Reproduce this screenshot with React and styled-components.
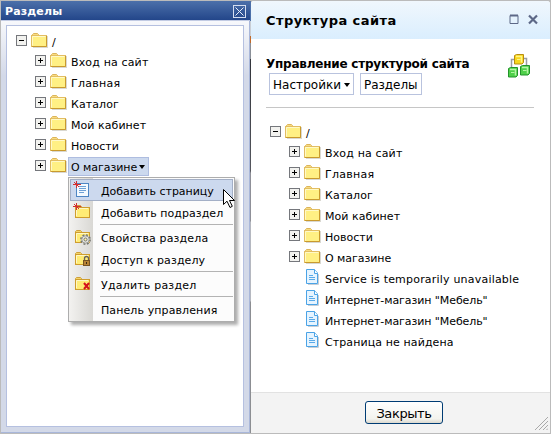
import React from 'react';
import styled, { createGlobalStyle, css } from 'styled-components';

const Global = createGlobalStyle`
  *, *::before, *::after { box-sizing: border-box; }
  body { margin: 0; background: #b9b9b9; }
`;

const Screen = styled.div`
  width: 551px;
  height: 434px;
  display: flex;
  overflow: hidden;
  padding-top: 1px;
  padding-left: 1px;
  background: #bbb;
  font-family: 'DejaVu Sans', Verdana, sans-serif;
  font-size: 11px;
  line-height: 13px;
  color: #000;
`;

const Label = styled.span`
  white-space: nowrap;
  letter-spacing: ${(p) => p.$ls ?? 0.1}px;
`;

/* ---- Left window ---- */
const SectionsWindow = styled.section`
  width: 249px;
  height: 432px;
  display: flex;
  flex-direction: column;
  background: linear-gradient(#f8f9fc 19px, #d3d9e8 75px);
  border-right: 1px solid #a9b7da;
  border-bottom: 1px solid #a9b7da;
`;

const SectionsTitle = styled.header`
  height: 20px;
  flex: none;
  width: 249px;
  display: flex;
  align-items: center;
  justify-content: space-between;
  padding: 1px 4px 0 4px;
  color: #fff;
  font-weight: bold;
  border-bottom: 1px solid #c2cbe3;
  background: linear-gradient(#4c70aa, #23468a);
`;

const SectionsBody = styled.div`
  flex: 1;
  margin: 4px 5px 5px 5px;
  border: 1px solid #b5c0e0;
  background: #fff;
  padding: 4px 0 0 9px;
`;

const Backdrop = styled.div`
  width: 1px;
  height: 432px;
  background: linear-gradient(#4c70aa 0 20px, #c9ced5 20px 35px, #c06a2b 35px 42px, #8a8f97 42px 58px, #34363c 58px 65px, #55575e 170px, #8f9098 172px 220px, #b5b8c0 221px 300px, #8c8e92 301px);
`;

/* ---- Tree ---- */
const Tree = styled.div`
  display: flex;
  flex-direction: column;
`;

const TreeRow = styled.div`
  display: flex;
  align-items: center;
  height: ${(p) => (p.$root ? 20 : 21)}px;
  padding-top: ${(p) => (p.$root ? 1 : 0)}px;
  padding-left: ${(p) => (p.$root ? 0 : p.$file ? 36 : 19)}px;
`;

const Toggle = styled.svg`
  flex: none;
  width: 11px;
  height: 11px;
  margin-right: 4px;
`;

const FolderSvg = styled.svg`
  flex: none;
  width: 17px;
  height: 15px;
`;

const RowLabel = styled.span`
  position: relative;
  display: flex;
  align-items: center;
  height: 19px;
  margin-left: ${(p) => (p.$file ? 3 : 1)}px;
  margin-top: 2px;
  padding: 1px 2px 0;
  border: 1px solid transparent;
  ${(p) => p.$active && css`
    border-color: #aebde0;
    background: #ccd9ee;
    width: 81px;
  `}
`;

const Caret = styled.svg`
  width: 6px;
  height: 4px;
  margin-left: ${(p) => p.$gap ?? 2}px;
  flex: none;
`;

function ToggleBox({ open }) {
  return (
    <Toggle viewBox="0 0 11 11">
      <rect x=".5" y=".5" width="10" height="10" fill="#f2f2ef" stroke="#75777c" />
      <path d={open ? 'M3 5.5h5' : 'M3 5.5h5M5.5 3v5'} stroke="#000" />
    </Toggle>
  );
}

function Folder() {
  return (
    <FolderSvg viewBox="0 0 17 15">
      <path d="M2 14h14V3h1v12H2z" fill="#c9c7bd" opacity=".7" />
      <path d="M1.500 3V1.500l1-1h4l1 1V3" fill="#f8dc80" stroke="#dcb45a" />
      <rect x=".5" y="2.500" width="15" height="11" fill="#fff084" stroke="#e2bd62" />
      <path d="M1.500 12.500v-9h13" fill="none" stroke="#fff9c8" />
      <path d="M1 13.500h14.500V3" fill="none" stroke="#c99a2e" />
    </FolderSvg>
  );
}

const FileSvg = styled.svg`
  flex: none;
  width: 13px;
  height: 16px;
  margin-top: -1px;
`;

function File() {
  return (
    <FileSvg viewBox="0 0 13 16">
      <path d="M2 15.500h10.500V5" fill="none" stroke="#c8ced5" />
      <path d="M.5.5h8l3 3.500v10.500H.5z" fill="#e6f4ff" stroke="#4aa3e6" />
      <path d="M8.500.5v4h3" fill="#fff" stroke="#4aa3e6" />
      <path d="M3 6.500h4M3 8.500h6M3 10.500h6" stroke="#5aaae8" />
    </FileSvg>
  );
}

function DownCaret({ gap }) {
  return (
    <Caret $gap={gap} viewBox="0 0 6 4">
      <path d="M0 0h6L3 4z" fill="#000" />
    </Caret>
  );
}

/* ---- Context menu ---- */
const Menu = styled.div`
  position: absolute;
  z-index: 2;
  left: -1px;
  top: 19px;
  width: 167px;
  padding: 1px;
  border: 1px solid #adadad;
  background: linear-gradient(90deg, #f3f2f0, #d9d8d4) 0 0 / 24px 100% no-repeat, #fcfcfc;
  box-shadow: 3px 3px 3px rgba(0, 0, 0, 0.32);
`;

const MenuItem = styled.div`
  display: flex;
  align-items: center;
  height: 22px;
  padding-left: 1px;
  border: 1px solid transparent;
  ${(p) => p.$active && css`
    border-color: #a3afc6;
    background: #ccd9ee;
  `}
`;

const MenuIcon = styled.svg`
  flex: none;
  width: 20px;
  height: 20px;
  margin-right: 9px;
`;

const MenuLabel = styled(Label)`
  padding-top: 2px;
`;

const Separator = styled.div`
  height: 1px;
  margin: 1px 0 1px 30px;
  background: #b3b3b3;
`;

const Pointer = styled.svg`
  position: absolute;
  z-index: 3;
  left: 154px;
  top: 31px;
  width: 12px;
  height: 20px;
`;

const spark = <path d="M1 4.500h8M4.500 1v7M2 2l5 5" stroke="#d32f2f" />;

const smallFolder = (
  <>
    <path d="M3.500 6V4.500l1-1h4l1 1V6" fill="#f4d568" stroke="#cfa03a" />
    <rect x="3.500" y="5.500" width="14" height="10" fill="#ffec75" stroke="#cf9d2d" />
    <path d="M4.500 14V6.500H16" fill="none" stroke="#fff8c4" />
  </>
);

const menuIcons = {
  page: (
    <>
      <rect x="4.500" y="3.500" width="12" height="13" fill="#f4faff" stroke="#4e86c4" />
      <path d="M7 6.500h7M7 8.500h7M7 10.500h7M7 12.500h5" stroke="#6ea1d6" />
      {spark}
    </>
  ),
  folder: (
    <>
      {smallFolder}
      {spark}
    </>
  ),
  gear: (
    <>
      {smallFolder}
      <circle cx="13.500" cy="12.500" r="4.600" fill="#eee" stroke="#77776e" strokeWidth="1.600" strokeDasharray="2 1.600" />
      <circle cx="13.500" cy="12.500" r="3.700" fill="#e4e4e0" stroke="#8a8a82" strokeWidth=".8" />
      <circle cx="13.500" cy="12.500" r="1.500" fill="#fff5a5" stroke="#77776e" />
    </>
  ),
  lock: (
    <>
      {smallFolder}
      <path d="M12.500 12V9.500a2 2 0 0 1 4 0V12" fill="none" stroke="#66625b" strokeWidth="1.300" />
      <rect x="11.500" y="11.500" width="6" height="5" fill="#b78334" stroke="#765322" />
      <path d="M14.500 13v2" stroke="#3d2b13" />
    </>
  ),
  remove: (
    <>
      {smallFolder}
      <path d="M12 9l5 6M17 9l-5 6" stroke="#d4141b" strokeWidth="2" />
    </>
  ),
};

const menuItems = [
  { text: 'Добавить страницу', icon: 'page', active: true, ls: -0.04 },
  { text: 'Добавить подраздел', icon: 'folder', ls: 0.05 },
  null,
  { text: 'Свойства раздела', icon: 'gear', ls: 0.15 },
  { text: 'Доступ к разделу', icon: 'lock', ls: 0.1 },
  null,
  { text: 'Удалить раздел', icon: 'remove', ls: 0.2 },
  null,
  { text: 'Панель управления', ls: 0.1 },
];

function ContextMenu() {
  return (
    <>
      <Menu>
        {menuItems.map((m, i) =>
          m ? (
            <MenuItem key={i} $active={m.active}>
              <MenuIcon viewBox="0 0 20 20">{menuIcons[m.icon]}</MenuIcon>
              <MenuLabel $ls={m.ls}>{m.text}</MenuLabel>
            </MenuItem>
          ) : (
            <Separator key={i} />
          )
        )}
      </Menu>
      <Pointer viewBox="0 0 12 20">
        <path d="M.5.5v15l3.500-3.300 3 6.300 2.300-1.200-2.800-5.800h5z" fill="#fff" stroke="#000" />
      </Pointer>
    </>
  );
}

const folders = [
  { name: 'Вход на сайт', ls: 0.15 },
  { name: 'Главная', ls: 0.25 },
  { name: 'Каталог', ls: 0.1 },
  { name: 'Мой кабинет', ls: 0.05 },
  { name: 'Новости', ls: 0 },
  { name: 'О магазине', ls: -0.05 },
];
const files = [
  { name: 'Service is temporarily unavailable', ls: 0.2 },
  { name: 'Интернет-магазин "Мебель"', ls: -0.08 },
  { name: 'Интернет-магазин "Мебель"', ls: -0.08 },
  { name: 'Страница не найдена', ls: 0.1 },
];

function SiteTree({ pages = [], activeIndex = -1 }) {
  return (
    <Tree>
      <TreeRow $root>
        <ToggleBox open />
        <Folder />
        <RowLabel><Label>/</Label></RowLabel>
      </TreeRow>
      {folders.map(({ name, ls }, i) => (
        <TreeRow key={name}>
          <ToggleBox />
          <Folder />
          <RowLabel $active={i === activeIndex}>
            <Label $ls={ls}>{name}</Label>
            {i === activeIndex && <DownCaret />}
            {i === activeIndex && <ContextMenu />}
          </RowLabel>
        </TreeRow>
      ))}
      {pages.map(({ name, ls }, i) => (
        <TreeRow key={i} $file>
          <File />
          <RowLabel $file><Label $ls={ls}>{name}</Label></RowLabel>
        </TreeRow>
      ))}
    </Tree>
  );
}

/* ---- Right dialog ---- */
const Dialog = styled.section`
  width: 299px;
  height: 432px;
  flex: none;
  display: flex;
  flex-direction: column;
  background: #fff;
  border-radius: 3px 3px 0 0;
  overflow: hidden;
`;

const DialogHeader = styled.header`
  height: 38px;
  flex: none;
  display: flex;
  align-items: center;
  padding: 1px 12px 0 15px;
  background: linear-gradient(#f0f7fd, #daeefe);
  font-size: 13px;
  font-weight: bold;
`;

const WindowButtons = styled.svg`
  width: 29px;
  height: 11px;
  margin: -2px 0 0 auto;
`;

const DialogBody = styled.div`
  flex: 1;
  padding: 15px 16px 0 15px;
`;

const Intro = styled.div`
  display: flex;
  justify-content: space-between;
  height: 54px;
  border-bottom: 1px solid #c6c6c6;
`;

const Heading = styled.h1`
  margin: 3px 0 1px;
  font-size: 12px;
  line-height: 15px;
`;

const Toolbar = styled.div`
  display: flex;
  gap: 6px;
  padding-left: 3px;
`;

const ToolButton = styled.button`
  display: flex;
  align-items: center;
  width: ${(p) => p.$w}px;
  height: 22px;
  padding: 1px 0 0 3px;
  border: 1px solid #b9c3de;
  background: #fff;
  color: #000;
  font: 12px 'DejaVu Sans', Verdana, sans-serif;
`;

const StructureIcon = styled.svg`
  width: 24px;
  height: 26px;
  margin-right: 3px;
`;

const TreeArea = styled.div`
  padding: 13px 0 0 4px;
`;

const DialogFooter = styled.footer`
  position: relative;
  flex: none;
  height: 41px;
  display: flex;
  justify-content: center;
  padding: 8px 0 0 7px;
  border-top: 1px solid #e2e2e2;
  background: #f3f3f3;
`;

const CloseButton = styled.button`
  width: 78px;
  height: 23px;
  padding: 1px 0 0;
  border: 1px solid #003c74;
  border-radius: 3px;
  background: linear-gradient(#fff, #f3f3ee 80%, #dcd9cf);
  color: #000;
  font: 13px 'DejaVu Sans', Tahoma, sans-serif;
`;

const Grip = styled.svg`
  position: absolute;
  right: 2px;
  bottom: 3px;
  width: 13px;
  height: 13px;
`;

function Cube({ x, y, edge, fill, light }) {
  return (
    <g transform={`translate(${x} ${y})`}>
      <path d="M.5 1.500l2-1h7v8l-1.500 1.500H.5z" fill={fill} stroke={edge} />
      <path d="M2 2.500h5.500v6" fill="none" stroke={light} strokeWidth="1.500" />
      <path d="M3 5.500h3.500" stroke={light} />
    </g>
  );
}

export default function App() {
  return (
    <Screen>
      <Global />
      <SectionsWindow>
        <SectionsTitle>
          <Label $ls={0.15}>Разделы</Label>
          <svg width="13" height="13" viewBox="0 0 13 13">
            <rect x=".5" y=".5" width="12" height="12" fill="none" stroke="#d5def0" />
            <path d="M2.500 2.500l8 8M10.500 2.500l-8 8" stroke="#e8eefa" />
          </svg>
        </SectionsTitle>
        <SectionsBody>
          <SiteTree activeIndex={5} />
        </SectionsBody>
      </SectionsWindow>
      <Backdrop />
      <Dialog>
        <DialogHeader>
          <Label $ls={0.43}>Структура сайта</Label>
          <WindowButtons viewBox="0 0 29 11">
            <path d="M1 1.500h8v8H1z" fill="none" stroke="#5d6887" />
            <path d="M1 1.500h8" stroke="#5d6887" strokeWidth="2" />
            <path d="M20 1.500l8 8M28 1.500l-8 8" stroke="#5d6887" strokeWidth="2.200" />
          </WindowButtons>
        </DialogHeader>
        <DialogBody>
          <Intro>
            <div>
              <Heading><Label $ls={-0.22}>Управление структурой сайта</Label></Heading>
              <Toolbar>
                <ToolButton $w={85}><Label $ls={0.05}>Настройки</Label><DownCaret gap={3} /></ToolButton>
                <ToolButton $w={62}><Label $ls={-0.05}>Разделы</Label></ToolButton>
              </Toolbar>
            </div>
            <StructureIcon viewBox="0 0 24 26">
              <path d="M4.500 14V5.500h5M15 4.500h4.500V12" fill="none" stroke="#9a9da3" strokeWidth="1.500" />
              <Cube x={7} y={0} edge="#b98d10" fill="#f8d71c" light="#fff68a" />
              <Cube x={1} y={13} edge="#23932a" fill="#4fd04a" light="#b4f5a4" />
              <Cube x={13} y={11} edge="#23932a" fill="#4fd04a" light="#b4f5a4" />
            </StructureIcon>
          </Intro>
          <TreeArea>
            <SiteTree pages={files} />
          </TreeArea>
        </DialogBody>
        <DialogFooter>
          <CloseButton><Label $ls={-0.4}>Закрыть</Label></CloseButton>
          <Grip viewBox="0 0 13 13">
            <path d="M0 13L13 0M4 13l9-9M8 13l5-5M11.500 13l1.500-1.500" stroke="#a9a9a9" />
          </Grip>
        </DialogFooter>
      </Dialog>
    </Screen>
  );
}
